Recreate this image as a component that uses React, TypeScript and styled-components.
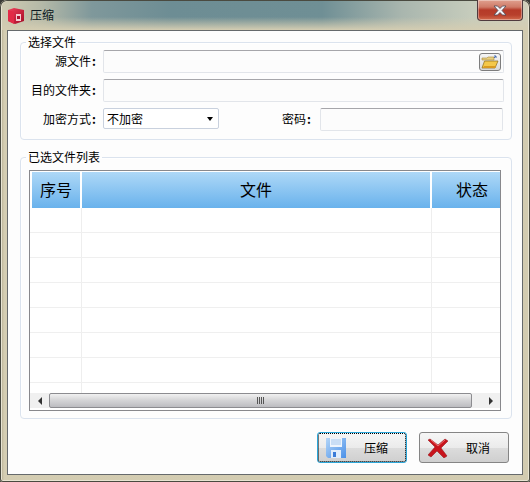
import React from "react";
import styled, { createGlobalStyle } from "styled-components";

const Global = createGlobalStyle`
  html, body { margin: 0; padding: 0; width: 530px; height: 482px; overflow: hidden; background: #3a3a36; }
  * { box-sizing: border-box; }
  body { font-family: "Noto Sans CJK SC", "Liberation Sans", sans-serif; font-size: 12px; color: #000; }
`;

const Win = styled.div`
  width: 530px; height: 482px; display: flex; flex-direction: column;
  padding: 0 7px 7px;
  border-radius: 7px 7px 3px 3px;
  background: linear-gradient(90deg, #a79e82 0, #d4cdb2 4px, #d2cbb0 100%);
  box-shadow: inset 0 0 0 1px #4a4a40, inset 0 0 0 2px #e8e4d2;
`;
const TitleBar = styled.div`
  height: 29px; margin: 1px -5px 0; padding-left: 6px; flex: none;
  display: flex; align-items: flex-start;
  border-radius: 6px 6px 0 0;
  background:
    linear-gradient(180deg, rgba(214,206,178,0) 0, rgba(214,206,178,0) 55%, #d4cdb2 100%),
    linear-gradient(90deg, #cfcab2 0, #b4b9a8 40px, #7f989b 90px, #6d8d94 170px, #6f8f95 320px, #a9b6ae 400px, #c6ccbc 470px, #d0cfbb 528px);
`;
const AppIcon = styled.svg`margin: 7px 0 0 0; width: 16px; height: 16px; flex: none;`;
const Title = styled.span`margin: 4px 0 0 6px; font-size: 12px; line-height: 20px; color: #0c1a22;`;
const CloseBtn = styled.div`
  margin-left: auto; margin-right: 5px; margin-top: -1px; width: 46px; height: 21px; flex: none;
  display: flex; align-items: center; justify-content: center;
  border: 1px solid #4f3a3e; border-top: none; border-radius: 0 0 4px 4px;
  background: linear-gradient(180deg, #e0a08e 0, #cf7b68 35%, #b53a28 50%, #b8402c 75%, #d26a4c 100%);
  box-shadow: inset 0 0 0 1px rgba(255,255,255,.35);
`;
const Panel = styled.div`
  flex: 1; min-height: 0; display: flex; flex-direction: column;
  padding: 3px 10px 0 12px;
  background: #fdfdfd; border: 1px solid #666a6c;
`;
const Group = styled.fieldset`
  margin: 0; padding: 0 7px 8px 9px; min-width: 0;
  border: 1px solid #dbe3ee; border-radius: 4px;
  box-shadow: inset 1px 1px 0 #fff;
  & + & { margin-top: 9px; padding: 0 10px 7px 8px; }
`;
const Legend = styled.legend`
  margin-left: -4px; padding: 0 2px; font-size: 12px; line-height: 16px; color: #000;
  ${Group} + ${Group} & { margin-left: -3px; }
`;
const Rows = styled.div`display: flex; flex-direction: column; gap: 6px; `;
const Row = styled.div`display: flex; align-items: flex-start; height: 23px;`;
const Label = styled.label`
  flex: none; width: 73px; padding-right: 6px; text-align: right; line-height: 21px;
  white-space: nowrap;
`;
const Colon = styled.span`display: inline-block; width: 6px; text-align: center; font-weight: 700;`;
const Input = styled.div<{ $w?: number }>`
  ${(p) => (p.$w ? `width:${p.$w}px;flex:none;` : "flex:1;")}
  height: 23px; display: flex; align-items: center; justify-content: flex-end; padding-right: 2px;
  background: #fcfcfc; border: 1px solid #e2e5ea; border-top-color: #a6a6aa; border-radius: 2px;
`;
const FolderBtn = styled.div`
  width: 22px; height: 18px; display: flex; align-items: center; justify-content: center;
  border: 1px solid #7d7d7d; border-radius: 3px;
  background: linear-gradient(180deg, #f5f5f5, #d9d9d9);
`;
const Select = styled.div`
  width: 116px; height: 21px; flex: none; display: flex; align-items: center; justify-content: space-between;
  padding: 0 5px 0 3px;
  background: #fff; border: 1px solid #c9d1de; border-radius: 2px; line-height: 18px;
`;
const Caret = styled.span`
  width: 0; height: 0; border-left: 3.5px solid transparent; border-right: 3.5px solid transparent; border-top: 4px solid #000;
`;
const PwdLabel = styled(Label)`margin-left: 58px; width: 43px; padding-right: 8px;`;
const TableBox = styled.div`
  margin-top: 5px; height: 241px; display: flex; flex-direction: column; background: #fff;
  border: 1px solid #88888c;
`;
const Head = styled.div`
  flex: none; display: grid; grid-template-columns: 48px 348px 68px; gap: 2px;
  padding: 1px 0 0 2px;
`;
const HeadCell = styled.div<{ $shift?: number }>`
  height: 36px; display: flex; align-items: center; justify-content: center;
  padding: 0 0 2px ${(p) => p.$shift ?? 0}px;
  font-size: 16px; background: linear-gradient(180deg, #aed8f7 0, #69b2ec 100%); color: #000;
`;
const Body = styled.div`flex: 1; min-height: 0; overflow: hidden;`;
const BodyRow = styled.div`
  height: 25px; display: grid; grid-template-columns: 52px 350px 1fr;
  border-bottom: 1px solid #efefef;
`;
const BodyCell = styled.div`
  border-right: 1px solid #eeeeee;
  &:last-child { border-right: none; }
`;
const HBar = styled.div`
  flex: none; height: 15px; margin-bottom: 2px; display: flex; padding-left: 1px; background: #f0f0f0;
`;
const Arrow = styled.div<{ $wide?: boolean }>`
  width: ${(p) => (p.$wide ? 28 : 18)}px; flex: none; display: flex; align-items: center;
  justify-content: ${(p) => (p.$wide ? "flex-end" : "center")};
  padding-right: ${(p) => (p.$wide ? 7 : 0)}px; background: #f0f0f0;
`;
const Thumb = styled.div`
  flex: 1; display: flex; align-items: center; justify-content: center; gap: 1px;
  border: 1px solid #8c8c90; border-radius: 2px;
  background: linear-gradient(180deg, #f1f1f1 0, #d6d6d8 45%, #bcbcc0 100%);
`;
const Grip = styled.span`width: 1px; height: 7px; background: #555;`;
const Footer = styled.div`
  display: flex; justify-content: flex-end; gap: 12px; margin: 13px 3px 0 0;
`;
const Btn = styled.button<{ $focus?: boolean }>`
  width: 90px; height: 31px; padding: 0 0 0 8px; display: flex; align-items: center;
  font: inherit; font-size: 12px; color: #000;
  border: 1px solid ${(p) => (p.$focus ? "#2ba6d9" : "#858585")}; border-radius: 3px;
  background: linear-gradient(180deg, #f6f6f6 0, #ebebeb 50%, #dcdcdc 52%, #cfcfcf 100%);
  ${(p) => (p.$focus ? "outline: 1px dotted #000; outline-offset: -2px;" : "")}
`;
const BtnText = styled.span`margin-left: 18px;`;
const BtnIcon = styled.svg`width: 20px; height: 20px; flex: none;`;

const Floppy = () => (
  <BtnIcon viewBox="0 0 20 20">
    <defs>
      <linearGradient id="fl" x1="0" y1="0" x2="1" y2="1">
        <stop offset="0" stopColor="#b4d6f8" />
        <stop offset="1" stopColor="#4a90e8" />
      </linearGradient>
    </defs>
    <path d="M0 0h20v20H2l-2-2z" fill="url(#fl)" />
    <rect x="4" y="0" width="12" height="9" fill="#eef5fd" />
    <path d="M5 2h10M5 4h10M5 6h10" stroke="#a6c8ee" strokeWidth="1" />
    <rect x="5" y="12" width="10" height="8" fill="#e2eefb" />
    <rect x="7" y="14" width="3" height="5" fill="#3a7cd8" />
  </BtnIcon>
);
const RedX = () => (
  <BtnIcon viewBox="0 0 20 20">
    <path d="M2 1l8 6 7-6 3 2-7 7 6 8-3 2-7-7-6 6-3-2 7-8-7-7z" fill="#c8141c" stroke="#8e0f14" strokeWidth=".5" />
    <path d="M3 2l7 6 7-6" stroke="#ef6a6a" strokeWidth="1" fill="none" />
  </BtnIcon>
);

export default function App() {
  const rows = Array.from({ length: 8 });
  return (
    <>
      <Global />
      <Win>
        <TitleBar>
          <AppIcon viewBox="0 0 16 16">
            <defs>
              <linearGradient id="ic" x1="0" y1="0" x2="1" y2="1">
                <stop offset="0" stopColor="#f2415c" />
                <stop offset="1" stopColor="#a30a26" />
              </linearGradient>
            </defs>
            <path d="M0 2l6-2 10 2v11l-9 3-7-3z" fill="url(#ic)" />
            <path d="M0 2l6 2v12l-6-3z" fill="#e22a46" />
            <rect x="8" y="6" width="5" height="7" fill="#f6ccd2" />
            <rect x="9" y="8" width="3" height="3" fill="#b01030" />
          </AppIcon>
          <Title>压缩</Title>
          <CloseBtn>
            <svg width="14" height="11" viewBox="0 0 14 11">
              <path d="M1 1h3.500L7 3.500 9.500 1H13L9 5.500l4 4.500H9.500L7 7.500 4.500 10H1l4-4.500z" fill="#f4f4f8" stroke="#4a4a56" strokeWidth=".8" />
            </svg>
          </CloseBtn>
        </TitleBar>
        <Panel>
          <Group>
            <Legend>选择文件</Legend>
            <Rows>
              <Row>
                <Label>源文件<Colon>:</Colon></Label>
                <Input>
                  <FolderBtn>
                    <svg width="18" height="14" viewBox="0 0 18 14">
                      <path d="M1 3h5l1-1h6v3H1z" fill="#e8cf80" stroke="#a88a3a" strokeWidth=".6" />
                      <path d="M13 3l2-2M15 1v2M15 1h-2" stroke="#4a6fb0" strokeWidth="1" fill="none" />
                      <path d="M1 13L3.500 6H17l-3 7z" fill="#f4c84a" stroke="#8a6a1a" strokeWidth=".7" />
                      <path d="M2 13h12l1-2H3z" fill="#d99a20" />
                    </svg>
                  </FolderBtn>
                </Input>
              </Row>
              <Row>
                <Label>目的文件夹<Colon>:</Colon></Label>
                <Input />
              </Row>
              <Row>
                <Label>加密方式<Colon>:</Colon></Label>
                <Select>
                  不加密
                  <Caret />
                </Select>
                <PwdLabel>密码<Colon>:</Colon></PwdLabel>
                <Input $w={183} />
              </Row>
            </Rows>
          </Group>
          <Group>
            <Legend>已选文件列表</Legend>
            <TableBox>
              <Head>
                <HeadCell>序号</HeadCell>
                <HeadCell>文件</HeadCell>
                <HeadCell $shift={12}>状态</HeadCell>
              </Head>
              <Body>
                {rows.map((_, i) => (
                  <BodyRow key={i}>
                    <BodyCell />
                    <BodyCell />
                    <BodyCell />
                  </BodyRow>
                ))}
              </Body>
              <HBar>
                <Arrow>
                  <svg width="5" height="8" viewBox="0 0 5 8"><path d="M4 0v8L0 4z" fill="#333" /></svg>
                </Arrow>
                <Thumb>
                  <Grip /><Grip /><Grip /><Grip />
                </Thumb>
                <Arrow $wide>
                  <svg width="5" height="8" viewBox="0 0 5 8"><path d="M1 0v8l4-4z" fill="#333" /></svg>
                </Arrow>
              </HBar>
            </TableBox>
          </Group>
          <Footer>
            <Btn $focus>
              <Floppy />
              <BtnText>压缩</BtnText>
            </Btn>
            <Btn>
              <RedX />
              <BtnText>取消</BtnText>
            </Btn>
          </Footer>
        </Panel>
      </Win>
    </>
  );
}
